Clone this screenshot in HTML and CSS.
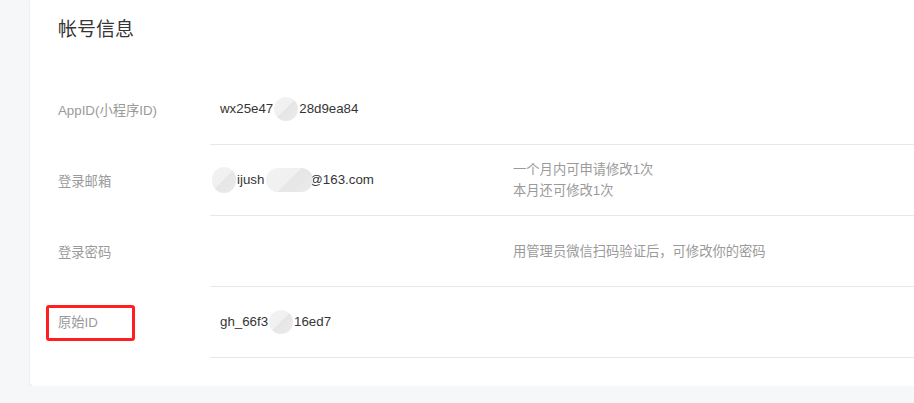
FILE: index.html
```html
<!DOCTYPE html>
<html lang="zh-CN">
<head>
    <meta charset="UTF-8">
    <title>帐号信息</title>
    <link rel="stylesheet" href="styles.css">
</head>
<body>
    <div class="card">
        <h2 class="title">帐号信息</h2>

        <div class="row">
            <div class="label">AppID(小程序ID)</div>
            <div class="cell">
                <div class="value">wx25e47<span class="blur"></span>28d9ea84</div>
            </div>
        </div>

        <div class="row">
            <div class="label">登录邮箱</div>
            <div class="cell">
                <div class="value"><span class="blur blur-first"></span>ijush<span class="blur blur-wide"></span>@163.com</div>
                <div class="tip">一个月内可申请修改1次<br>本月还可修改1次</div>
            </div>
        </div>

        <div class="row">
            <div class="label">登录密码</div>
            <div class="cell">
                <div class="value"></div>
                <div class="tip">用管理员微信扫码验证后，可修改你的密码</div>
            </div>
        </div>

        <div class="row">
            <div class="label"><span class="marked">原始ID</span></div>
            <div class="cell">
                <div class="value">gh_66f3<span class="blur"></span>16ed7</div>
            </div>
        </div>
    </div>
</body>
</html>
```

FILE: styles.css
```css
html, body {
    overflow: hidden;
}
body {
    margin: 0;
    background-color: #f6f7f9;
    font-family: "Liberation Sans", "Noto Sans CJK SC", sans-serif;
    font-size: 13.3px;
}
.card {
    margin-left: 30px;
    margin-right: -10px;
    padding: 18px 0 28px 28px;
    background-color: #fff;
    border-radius: 0 0 4px 4px;
    box-shadow: 0 1px 2px rgba(0, 0, 0, 0.12);
}
.title {
    margin: 0 0 32px;
    font-size: 19px;
    font-weight: normal;
    line-height: 24px;
    color: #353535;
}
.row {
    display: flex;
    height: 71px;
}
.label {
    width: 152px;
    display: flex;
    align-items: center;
    color: #9a9a9a;
}
.marked {
    position: relative;
    display: inline-block;
    line-height: 20px;
}
.marked::after {
    content: "";
    position: absolute;
    left: -12px;
    top: -8px;
    width: 83px;
    height: 30px;
    border: 3px solid #ff1f1f;
    border-radius: 3px;
}
.cell {
    flex: 1;
    display: flex;
    align-items: center;
    padding-left: 10px;
    border-bottom: 1px solid #e7e7eb;
}
.value {
    width: 293px;
    color: #353535;
    white-space: nowrap;
}
.tip {
    color: #9a9a9a;
    line-height: 21px;
}
.blur {
    display: inline-block;
    width: 24px;
    height: 24px;
    margin: 0 1px;
    vertical-align: middle;
    border-radius: 12px;
    background: linear-gradient(135deg, #f3f3f3 0%, #f0f0f0 50%, #e6e6e6 50%, #ebebeb 100%);
}
.blur-first {
    margin: 0 1px 0 -8px;
    height: 26px;
}
.blur-wide {
    width: 47px;
    margin: 0 -4px 0 2px;
    position: relative;
}
```
